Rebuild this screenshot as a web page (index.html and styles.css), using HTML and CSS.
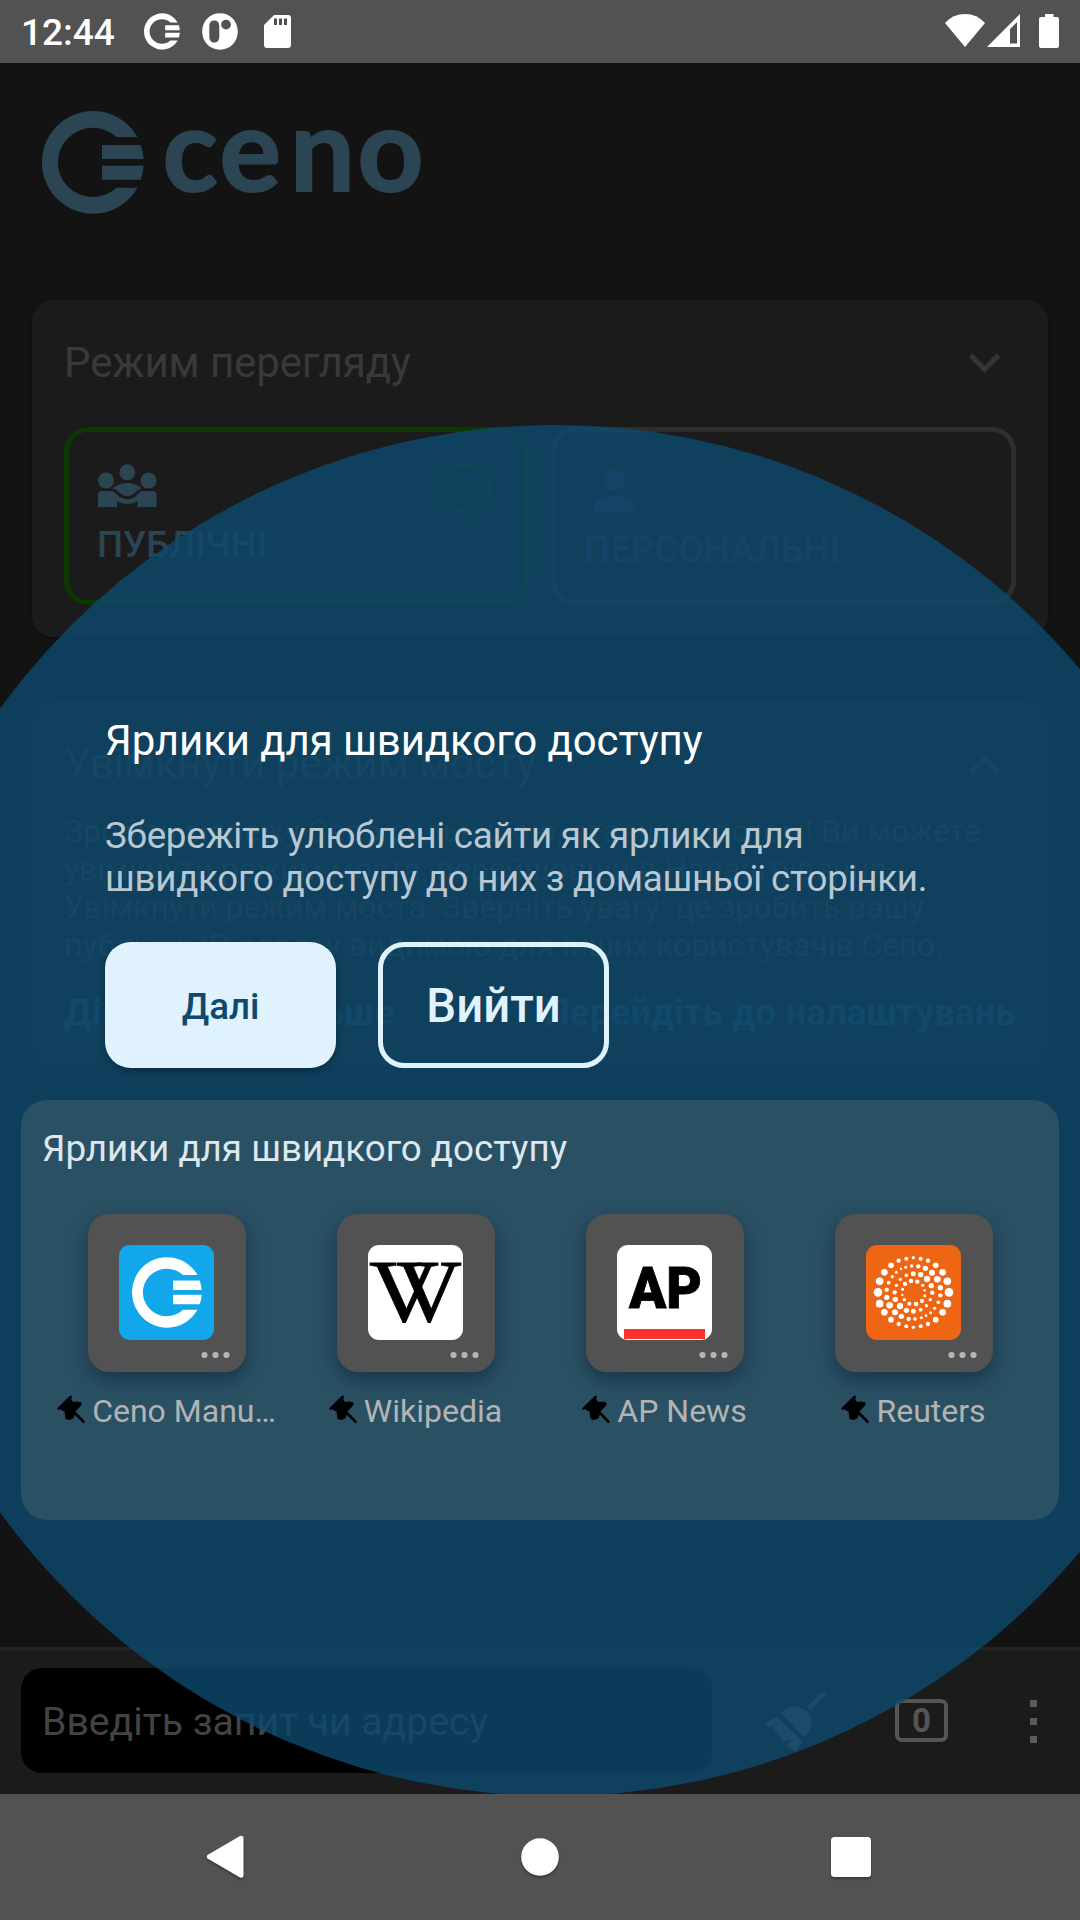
FILE: index.html
```html
<!DOCTYPE html>
<html lang="uk">
<head>
<meta charset="utf-8">
<title>Ceno</title>
<link rel="stylesheet" href="styles.css">
</head>
<body>
<svg class="defs" aria-hidden="true">
  <symbol id="ceno-mark" viewBox="0 0 102 103">
    <path d="M95.5 26A51.1 51.35 0 1 0 95.5 76.7H74.5A34.9 34.6 0 1 1 74.5 26Z"/>
    <path d="M60 34H98.6A51 51 0 0 1 101.6 48H60ZM60 54.7H101.6A51 51 0 0 1 98.6 68.7H60Z"/>
  </symbol>
  <symbol id="pin" viewBox="0 0 84 84">
    <path d="M5 41L41 6M50 50L79 80" fill="none" stroke="#000" stroke-width="8" stroke-linecap="round"/>
    <path d="M5 40L40 6L47 20L66 20Q77 22 73 31L53 52Q56 62 49 70Q40 76 30 74Q23 70 24 60L23 50L12 44Z"/>
  </symbol>
  <symbol id="more" viewBox="0 0 29 8">
    <circle cx="3.5" cy="4" r="3.1"/><circle cx="14.5" cy="4" r="3.1"/><circle cx="25.5" cy="4" r="3.1"/>
  </symbol>
</svg>
<div class="phone">
  <header class="status">
    <span class="clock">12:44</span>
    <svg class="st-ceno" width="36" height="37"><use href="#ceno-mark"/></svg>
    <svg class="st-p" width="36" height="37" viewBox="0 0 36 37"><path fill-rule="evenodd" d="M18 .3C28 .3 35.8 8 35.8 18.5S28 36.7 18 36.7.2 29 .2 18.500 8 .3 18 .3ZM12.300 7.500C8.500 7.500 7.300 10 7.300 14V23C7.300 27 8.500 29.500 12.300 29.500S17.300 27 17.300 23V14C17.300 10 16 7.500 12.300 7.500Z"/><circle cx="24" cy="11.600" r="4.900" fill="#525252"/></svg>
    <svg class="st-sd" width="27" height="33" viewBox="0 0 27 33"><path fill-rule="evenodd" d="M10 0H24Q27 0 27 3V30Q27 33 24 33H3Q0 33 0 30V10ZM10 3.500V10H13V3.500ZM15 3.500V10H18V3.500ZM20 3.500V10H23V3.500Z"/></svg>
    <span class="spacer"></span>
    <svg class="st-wifi" width="40" height="33" viewBox="0 0 40 33"><path d="M0 9Q8 0 20 0T40 9L20 33Z"/></svg>
    <svg class="st-sig" width="33" height="33" viewBox="0 0 33 33"><path fill-rule="evenodd" d="M33 0V33H0ZM30 8L23 15V29.500H30Z"/></svg>
    <svg class="st-bat" width="20" height="34" viewBox="0 0 20 34"><path d="M6 0H14.500V3H18Q20 3 20 5V32Q20 34 18 34H2Q0 34 0 32V5Q0 3 2 3H6Z"/></svg>
  </header>

  <div class="app">
    <main class="home">
      <div class="brand">
        <svg class="brand-mark" width="102" height="103"><use href="#ceno-mark"/></svg>
        <svg class="brand-word" width="290" height="103" viewBox="0 0 290 103"><text y="79.500" x="8.500 65.500 136 203.500">ceno</text></svg>
      </div>

      <section class="card">
        <div class="card-head">
          <h2 class="card-title">Режим перегляду</h2>
          <svg class="chev" width="63" height="63" viewBox="0 0 24 24"><path d="M7.410 8.590 12 13.170l4.590-4.580L18 10l-6 6-6-6z"/></svg>
        </div>
        <div class="modes">
          <div class="mode mode-public">
            <svg class="mode-icon" width="59" height="43" viewBox="0 0 59 43"><circle cx="8" cy="16.500" r="8"/><circle cx="29.300" cy="8.300" r="8"/><circle cx="50.500" cy="16.500" r="8"/><path d="M14.500 24.500Q21 19 29.300 19T44 24.500C38 25 37 32 29.300 32S20.500 25 14.500 24.500Z"/><path d="M0 43V31Q0 27 4 27H13C18.500 27 20 35.300 29.300 35.300S40 27 45.500 27H54.500Q58.500 27 58.500 31V43H39.500V37.300Q29.300 42.500 19 37.300V43Z"/></svg>
            <svg class="mode-check" width="63" height="63" viewBox="0 0 24 24"><path d="M16.590 7.580 10 14.170l-3.590-3.580L5 12l5 5 8-8zM12 2C6.480 2 2 6.480 2 12s4.480 10 10 10 10-4.480 10-10S17.520 2 12 2zm0 18c-4.420 0-8-3.580-8-8s3.580-8 8-8 8 3.580 8 8-3.580 8-8 8z"/></svg>
            <span class="mode-name">ПУБЛІЧНІ</span>
          </div>
          <div class="mode mode-personal">
            <svg class="mode-icon" width="63" height="63" viewBox="0 0 24 24"><path d="M12 12c2.210 0 4-1.790 4-4s-1.790-4-4-4-4 1.790-4 4 1.790 4 4 4zm0 2c-2.670 0-8 1.340-8 4v2h16v-2c0-2.660-5.330-4-8-4z"/></svg>
            <span class="mode-name">ПЕРСОНАЛЬНІ</span>
          </div>
        </div>
      </section>

      <section class="card">
        <div class="card-head">
          <h2 class="card-title">Увімкнути режим мосту</h2>
          <svg class="chev chev-up" width="63" height="63" viewBox="0 0 24 24"><path d="m12 8-6 6 1.410 1.410L12 10.830l4.590 4.580L18 14z"/></svg>
        </div>
        <p class="card-text">Зробіть мережу Ceno сильнішою, ставши мостом! Ви можете<br>увімкнути режим моста, перейшовши в Налаштування -<br>Увімкнути режим моста. Зверніть увагу: це зробить вашу<br>публічну IP-адресу видимою для інших користувачів Ceno.</p>
        <div class="card-links"><span class="link-more">Дізнайтеся більше</span><span>Перейдіть до налаштувань</span></div>
      </section>
    </main>

    <footer class="toolbar">
      <div class="url">Введіть запит чи адресу</div>
      <svg class="broom" width="61" height="61" viewBox="0 0 61 61"><path d="M57 1.500Q61 .5 60.500 4L46 19L42.500 15.500ZM16 22.500Q27 12 37 17T46 30Q48 38 39 46ZM12 25.500L37.500 50.500L31 61Q26 58 22 54L27 47.500L19 50L7.500 38L10.500 34.500L4 36.500L0 32Z"/></svg>
      <div class="tabs">0</div>
      <svg class="menu" width="7" height="43" viewBox="0 0 7 43"><path d="M0 0H7V7H0ZM0 18H7V25H0ZM0 36H7V43H0Z"/></svg>
    </footer>

    <div class="prompt">
      <div class="prompt-circle"></div>
      <div class="prompt-body">
        <h1 class="prompt-title">Ярлики для швидкого доступу</h1>
        <p class="prompt-text">Збережіть улюблені сайти як ярлики для<br>швидкого доступу до них з домашньої сторінки.</p>
        <div class="actions">
          <button class="btn btn-next">Далі</button>
          <button class="btn btn-exit">Вийти</button>
        </div>
        <section class="focus">
          <h2 class="focus-title">Ярлики для швидкого доступу</h2>
          <div class="sites">
            <div class="site">
              <div class="tile">
                <div class="fav fav-ceno"><svg width="70" height="71"><use href="#ceno-mark"/></svg></div>
                <svg class="more" width="29" height="8"><use href="#more"/></svg>
              </div>
              <div class="label"><svg class="pin" width="28" height="28"><use href="#pin"/></svg><span>Ceno Manu…</span></div>
            </div>
            <div class="site">
              <div class="tile">
                <div class="fav"><svg width="95" height="95" viewBox="0 0 95 95"><g class="wiki"><text x="1" y="76" textLength="70" lengthAdjust="spacingAndGlyphs">V</text><text x="28" y="76" textLength="66" lengthAdjust="spacingAndGlyphs">V</text></g></svg></div>
                <svg class="more" width="29" height="8"><use href="#more"/></svg>
              </div>
              <div class="label"><svg class="pin" width="28" height="28"><use href="#pin"/></svg><span>Wikipedia</span></div>
            </div>
            <div class="site">
              <div class="tile">
                <div class="fav"><svg width="95" height="95" viewBox="0 0 95 95"><text class="ap" x="12" y="63" textLength="73" lengthAdjust="spacingAndGlyphs">AP</text><path d="M7 84H88V94H7Z" fill="#ff322e"/></svg></div>
                <svg class="more" width="29" height="8"><use href="#more"/></svg>
              </div>
              <div class="label"><svg class="pin" width="28" height="28"><use href="#pin"/></svg><span>AP News</span></div>
            </div>
            <div class="site">
              <div class="tile">
                <div class="fav fav-reuters"><svg width="95" height="95" viewBox="93 30 285 285" fill="#fff">
                  <circle cx="235" cy="68" r="5"/><circle cx="257" cy="71" r="6"/><circle cx="279" cy="77" r="6.500"/><circle cx="302" cy="91" r="8.500"/><circle cx="323" cy="112" r="10"/><circle cx="337" cy="139" r="11.500"/><circle cx="342" cy="172" r="13"/><circle cx="337" cy="206" r="11.500"/><circle cx="323" cy="232" r="10"/><circle cx="302" cy="254" r="8.500"/><circle cx="279" cy="267" r="6.500"/><circle cx="257" cy="274" r="6"/><circle cx="235" cy="277" r="5"/><circle cx="214" cy="274" r="6"/><circle cx="191" cy="267" r="6.500"/><circle cx="168" cy="254" r="8.500"/><circle cx="148" cy="232" r="10"/><circle cx="134" cy="206" r="11.500"/><circle cx="129" cy="172" r="13"/><circle cx="134" cy="139" r="11.500"/><circle cx="148" cy="112" r="10"/><circle cx="168" cy="91" r="8.500"/><circle cx="191" cy="77" r="6.500"/><circle cx="214" cy="71" r="6"/>
                  <circle cx="230" cy="93" r="5"/><circle cx="250" cy="94" r="6.500"/><circle cx="271" cy="100" r="8"/><circle cx="291" cy="113" r="9"/><circle cx="307" cy="133" r="10"/><circle cx="316" cy="158" r="8"/><circle cx="316" cy="181" r="6.500"/><circle cx="310" cy="202" r="5.500"/><circle cx="299" cy="220" r="5"/><circle cx="287" cy="233" r="4.500"/><circle cx="273" cy="242" r="4"/><circle cx="259" cy="248" r="4.500"/><circle cx="240" cy="252" r="5.500"/><circle cx="221" cy="252" r="6.500"/><circle cx="199" cy="244" r="8"/><circle cx="180" cy="232" r="9"/><circle cx="164" cy="211" r="10"/><circle cx="155" cy="187" r="8"/><circle cx="155" cy="164" r="6.500"/><circle cx="161" cy="143" r="5.500"/><circle cx="172" cy="125" r="5"/><circle cx="184" cy="112" r="4.500"/><circle cx="198" cy="102" r="3.500"/><circle cx="212" cy="97" r="4.500"/>
                  <circle cx="235" cy="116" r="7.500"/><circle cx="257" cy="119" r="8"/><circle cx="276" cy="132" r="9.500"/><circle cx="289" cy="152" r="8"/><circle cx="292" cy="173" r="6.500"/><circle cx="286" cy="194" r="5"/><circle cx="274" cy="212" r="5"/><circle cx="257" cy="224" r="5.500"/><circle cx="235" cy="229" r="7.500"/><circle cx="214" cy="226" r="8"/><circle cx="195" cy="213" r="9.500"/><circle cx="181" cy="193" r="8"/><circle cx="179" cy="172" r="6.500"/><circle cx="184" cy="151" r="5"/><circle cx="196" cy="133" r="5"/><circle cx="214" cy="121" r="5.500"/>
                  <circle cx="228" cy="138" r="7"/><circle cx="247" cy="140" r="6.500"/><circle cx="263" cy="151" r="5"/><circle cx="269" cy="166" r="3.500"/><circle cx="269" cy="182" r="4.500"/><circle cx="261" cy="198" r="6.500"/><circle cx="243" cy="207" r="7"/><circle cx="223" cy="206" r="6"/><circle cx="208" cy="194" r="5"/><circle cx="202" cy="180" r="3.500"/><circle cx="203" cy="163" r="4.500"/><circle cx="210" cy="147" r="6.500"/>
                </svg></div>
                <svg class="more" width="29" height="8"><use href="#more"/></svg>
              </div>
              <div class="label"><svg class="pin" width="28" height="28"><use href="#pin"/></svg><span>Reuters</span></div>
            </div>
          </div>
        </section>
      </div>
    </div>
  </div>

  <nav class="sysnav">
    <svg class="nav-back" width="38" height="44" viewBox="0 0 38 44"><path d="M34 1Q37.500 0 37.500 3.500V40Q37.500 43.500 34 42.500L1.500 23.500Q0 21.700 1.500 20Z"/></svg>
    <svg class="nav-home" width="38" height="38" viewBox="0 0 38 38"><circle cx="19" cy="19" r="18.800"/></svg>
    <svg class="nav-recent" width="40" height="40" viewBox="0 0 40 40"><rect width="40" height="40" rx="3.500"/></svg>
  </nav>
</div>
</body>
</html>
```
FILE: styles.css
```css
* { box-sizing: border-box; }
body { margin: 0; background: #131313; font-family: Roboto, "Noto Sans", sans-serif; }
h1, h2, p { margin: 0; font-weight: 400; }
svg { display: block; flex: none; }
.defs { position: absolute; width: 0; height: 0; }
.phone { display: flex; flex-direction: column; width: 1080px; height: 1920px; overflow: hidden; }

.status { display: flex; align-items: flex-start; height: 63px; padding: 0 21px; background: #525252; color: #fff; fill: #fff; }
.clock { width: 123px; font-size: 37px; font-weight: 500; line-height: 66px; }
.st-ceno { margin-top: 13px; }
.st-p { margin: 13px 0 0 22px; }
.st-sd { margin: 15px 0 0 26px; }
.spacer { flex: 1; }
.st-wifi { margin-top: 14px; }
.st-sig { margin: 14px 0 0 2px; }
.st-bat { margin: 14px 0 0 19px; }

.app { position: relative; display: flex; flex-direction: column; height: 1731px; overflow: hidden; }
.home { flex: 1; }
.brand { display: flex; height: 237px; padding: 48px 42px 0; fill: #2b4553; }
.brand-mark { margin-right: 10px; }
.brand-word { overflow: visible; font: 700 115px Lato, sans-serif; stroke: #2b4553; stroke-width: 2px; }
.card { margin: 0 32px 64px; padding: 31px 32px 32px; border-radius: 21px; background: #1b1b1b; color: #393939; box-shadow: 0 2px 5px rgba(0, 0, 0, .25); }
.card-head { display: flex; justify-content: space-between; height: 63px; }
.card-title { font-size: 42px; line-height: 63px; letter-spacing: -.1px; }
.chev { fill: #343434; }
.chev-up { margin-top: 2px; }
.modes { display: grid; grid-template-columns: 1fr 1fr; gap: 22px; margin-top: 33px; }
.mode { display: grid; grid-template-columns: 1fr auto; height: 178px; border: 5px solid #0d3800; border-radius: 24px; padding: 0 26px 0 28px; }
.mode-name { grid-column: 1 / -1; font-size: 36.750px; font-weight: 500; line-height: 43px; }
.mode-public { color: #2b4553; grid-template-rows: 91px 43px; }
.mode-public .mode-icon { fill: #2b4553; margin: 32px 0 0 1px; }
.mode-check { fill: #0d3800; margin-top: 25px; }
.mode-personal { border-color: #2e2e2e; color: #3c2850; grid-template-rows: 96px 43px; }
.mode-personal .mode-icon { fill: #3c2850; margin: 27px 0 0 -1px; }
.card-text { margin-top: 17px; font-size: 31.900px; line-height: 38px; white-space: nowrap; }
.card-links { display: flex; justify-content: space-between; margin-top: 27px; color: #1f465b; font-size: 36.750px; font-weight: 700; line-height: 43px; white-space: nowrap; }
.link-more { letter-spacing: .3px; }

.toolbar { display: flex; height: 147px; padding: 18px 43px 0 21px; border-top: 3px solid #232323; background: #1b1b1b; fill: #555; }
.url { width: 691px; height: 105px; padding-left: 21px; border-radius: 21px; background: #000; color: #434343; font-size: 39.200px; line-height: 109px; }
.broom { margin: 23px 0 0 53px; }
.tabs { width: 53px; height: 43px; margin: 31px 0 0 69px; border: 4px solid #555; border-radius: 7px; color: #555; font-size: 33px; font-weight: 700; line-height: 35px; text-align: center; }
.menu { margin: 32px 0 0 82px; fill: #5b5b5b; }

.prompt { position: absolute; inset: 0; }
.prompt-circle { position: absolute; left: -130px; top: 362px; width: 1371px; height: 1371px; border-radius: 50%; background: rgba(12, 74, 110, .8); }
.prompt-body { position: relative; padding: 653px 21px 0; }
.prompt-title { padding-left: 84px; color: #fff; font-size: 42px; line-height: 49px; letter-spacing: -.1px; }
.prompt-text { margin-top: 49px; padding-left: 84px; color: #b7c8d2; font-size: 36.750px; line-height: 43px; letter-spacing: -.26px; white-space: nowrap; }
.actions { display: flex; gap: 42px; margin: 42px 0 32px 84px; }
.btn { width: 231px; height: 126px; padding: 0; border: 0; border-radius: 26px; font-family: inherit; font-weight: 500; }
.btn-next { padding-top: 2px; background: #e0f2fe; color: #0c4a6e; font-size: 36.750px; box-shadow: 0 3px 6px rgba(0, 0, 0, .3); }
.btn-exit { padding-top: 2px; border: 5px solid #e0f2fe; background: none; color: #e0f2fe; font-size: 47.250px; }
.focus { height: 420px; padding: 25px 21px 0; border-radius: 26px; background: #2a5064; }
.focus-title { color: #dde7ee; font-size: 36.750px; line-height: 47px; }
.sites { display: grid; grid-template-columns: repeat(4, 1fr); margin-top: 42px; }
.site { display: flex; flex-direction: column; align-items: center; }
.tile { display: flex; flex-direction: column; align-items: center; width: 158px; height: 158px; padding-top: 31px; border-radius: 21px; background: #525252; box-shadow: 0 8px 18px rgba(10, 30, 45, .5); }
.fav { display: grid; place-items: center; width: 95px; height: 95px; border-radius: 11px; overflow: hidden; background: #fff; }
.fav-ceno { background: #12a6eb; fill: #fff; }
.fav-reuters { background: #ee6613; }
.wiki { font: 88px "Liberation Serif", serif; stroke: #000; stroke-width: .8px; }
.ap { font: 900 57px Roboto, sans-serif; stroke: #000; stroke-width: .8px; }
.more { align-self: flex-end; margin: 11px 16px 0 0; fill: #b5b5b5; }
.label { display: flex; gap: 7px; margin-top: 21px; color: #b3b3b3; font-size: 32px; line-height: 37px; }
.pin { margin-top: 2px; }

.sysnav { display: flex; align-items: center; height: 126px; padding-left: 206px; background: #525252; fill: #fff; }
.sysnav svg { filter: drop-shadow(0 2px 1px rgba(0, 0, 0, .3)); }
.nav-home { margin-left: 277px; }
.nav-recent { margin-left: 272px; }
```
